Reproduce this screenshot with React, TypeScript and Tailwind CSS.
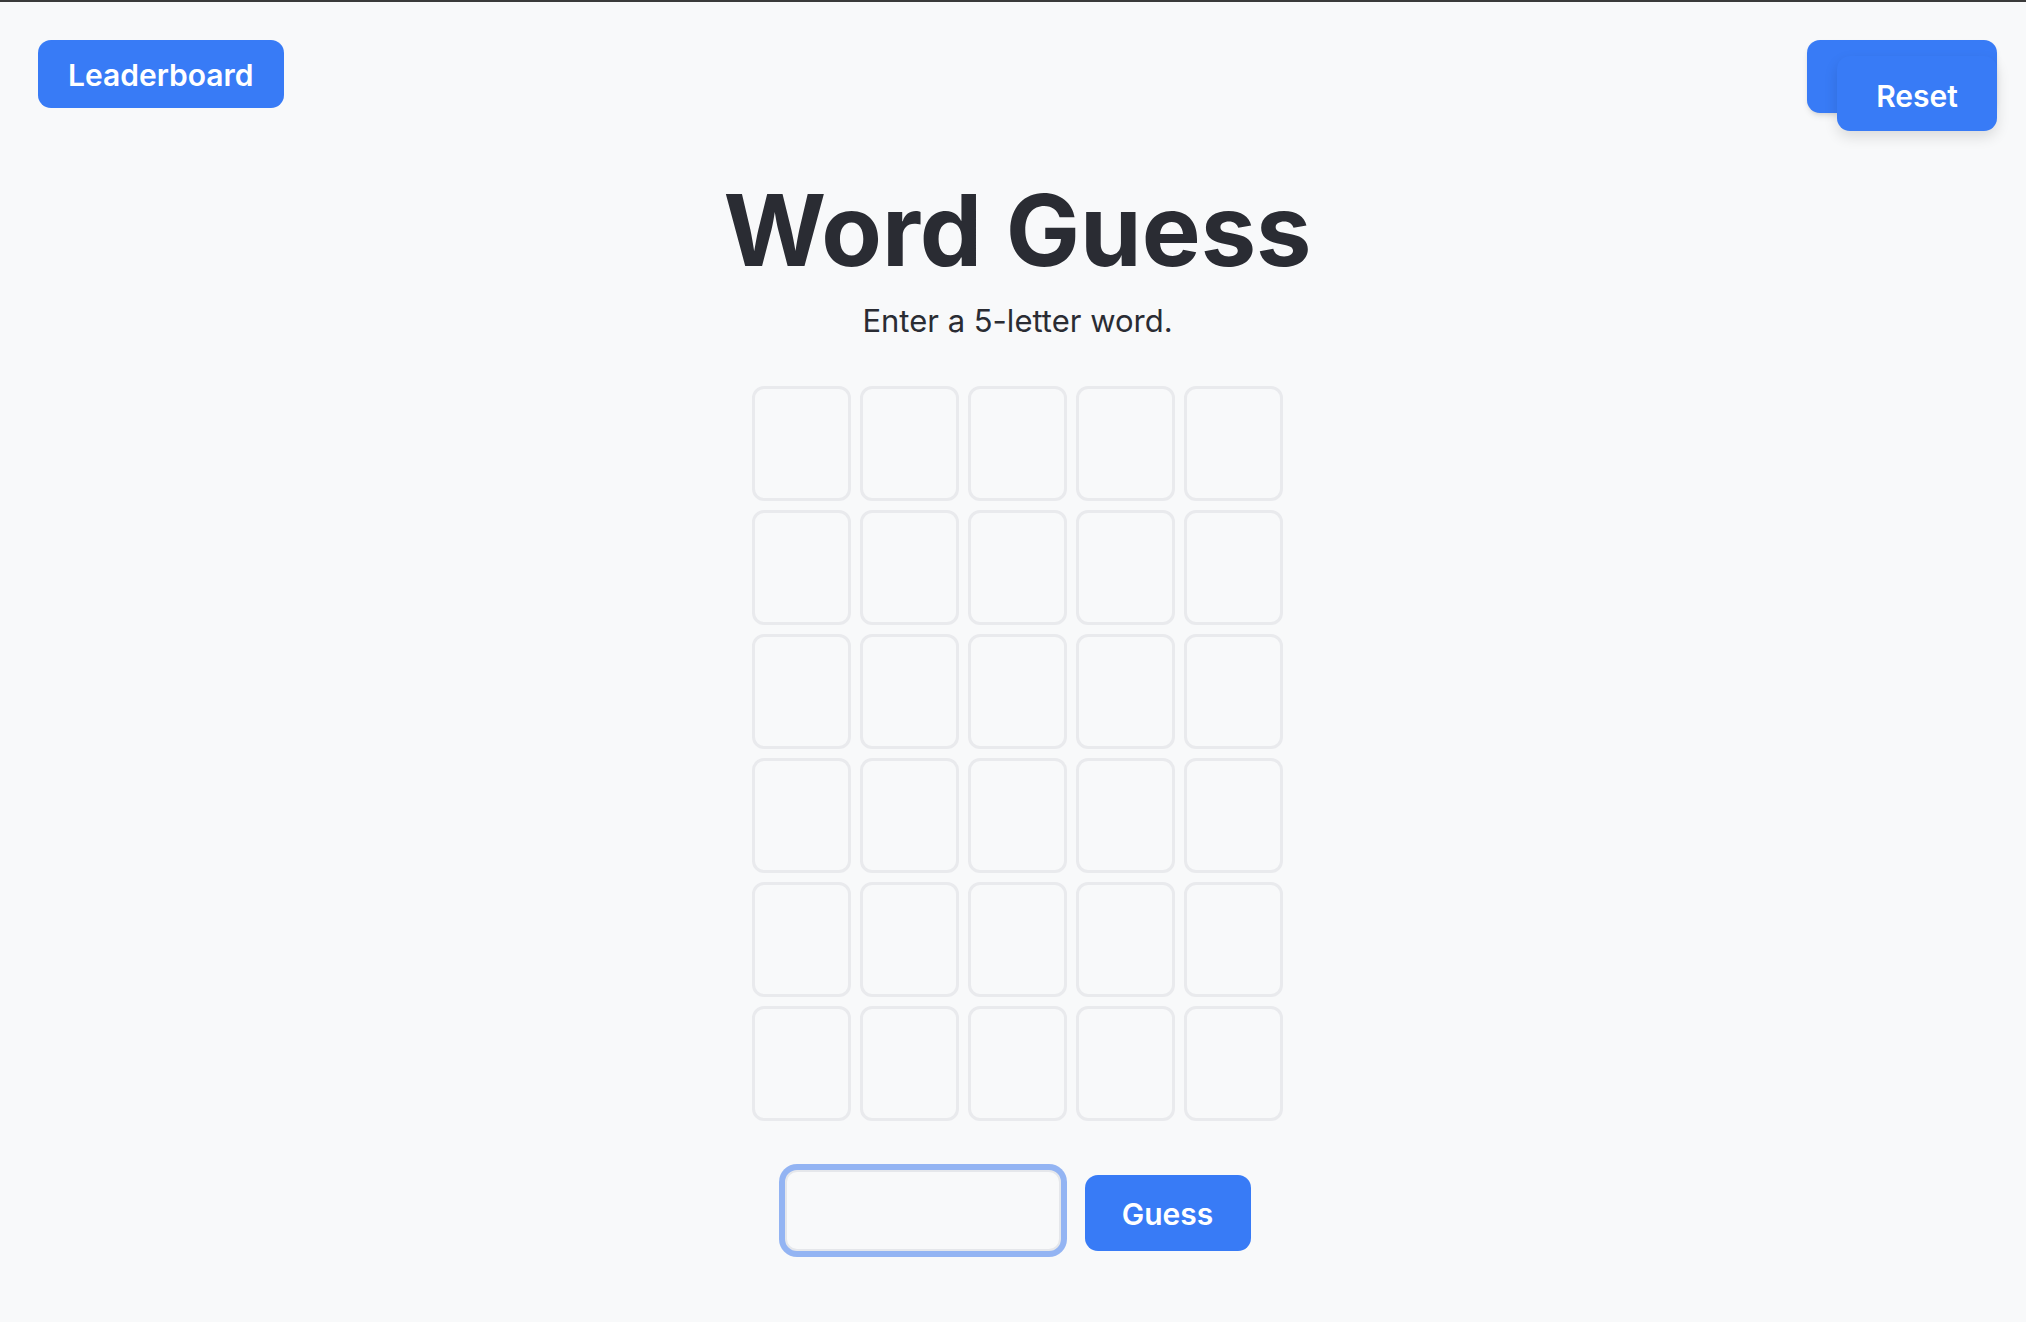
export default function App() {
  const rows = Array.from({ length: 6 });
  const cols = Array.from({ length: 5 });

  return (
    <div className="min-h-screen bg-[#f8f9fa] border-t-2 border-[#3a3a3a] font-['Inter',sans-serif] text-[#2a2c33]">
      <header className="flex items-start justify-between pl-[38px] pr-[29px] pt-[38px]">
        <button className="h-[68px] px-[30px] pt-[2px] rounded-[13px] bg-[#387bf6] text-white text-[30px] font-semibold">
          Leaderboard
        </button>
        <div className="relative w-[190px] h-[91px]">
          <div className="h-[73px] w-[190px] rounded-[13px] bg-[#387bf6] shadow-md" />
          <button className="absolute right-0 top-[16px] h-[75px] w-[160px] pt-[5px] rounded-[13px] bg-[#387bf6] text-white text-[30px] font-semibold shadow-[0_6px_14px_rgba(0,0,0,0.12)]">
            Reset
          </button>
        </div>
      </header>

      <main className="flex flex-col items-center pl-[9px] pt-[50px]">
        <h1 className="text-[99px] leading-none font-bold">Word Guess</h1>
        <p className="mt-[18px] text-[31px] leading-[45px]">Enter a 5-letter word.</p>

        <div className="mt-[43px] grid grid-cols-5 gap-[9px]">
          {rows.map((_, r) =>
            cols.map((_, c) => (
              <div
                key={`${r}-${c}`}
                className="w-[99px] h-[115px] rounded-[12px] border-[3px] border-[#e9eaed]"
              />
            ))
          )}
        </div>

        <div className="mt-[49px] flex items-end gap-[24px]">
          <input
            type="text"
            maxLength={5}
            className="w-[276px] h-[81px] rounded-[12px] border-2 border-[#e5e7eb] bg-[#f8f9fa] ring-[6px] ring-[#93b4f3] outline-none px-4 text-[30px]"
          />
          <button className="h-[76px] w-[166px] pt-[3px] rounded-[13px] bg-[#387bf6] text-white text-[30px] font-semibold">
            Guess
          </button>
        </div>
      </main>
    </div>
  );
}
